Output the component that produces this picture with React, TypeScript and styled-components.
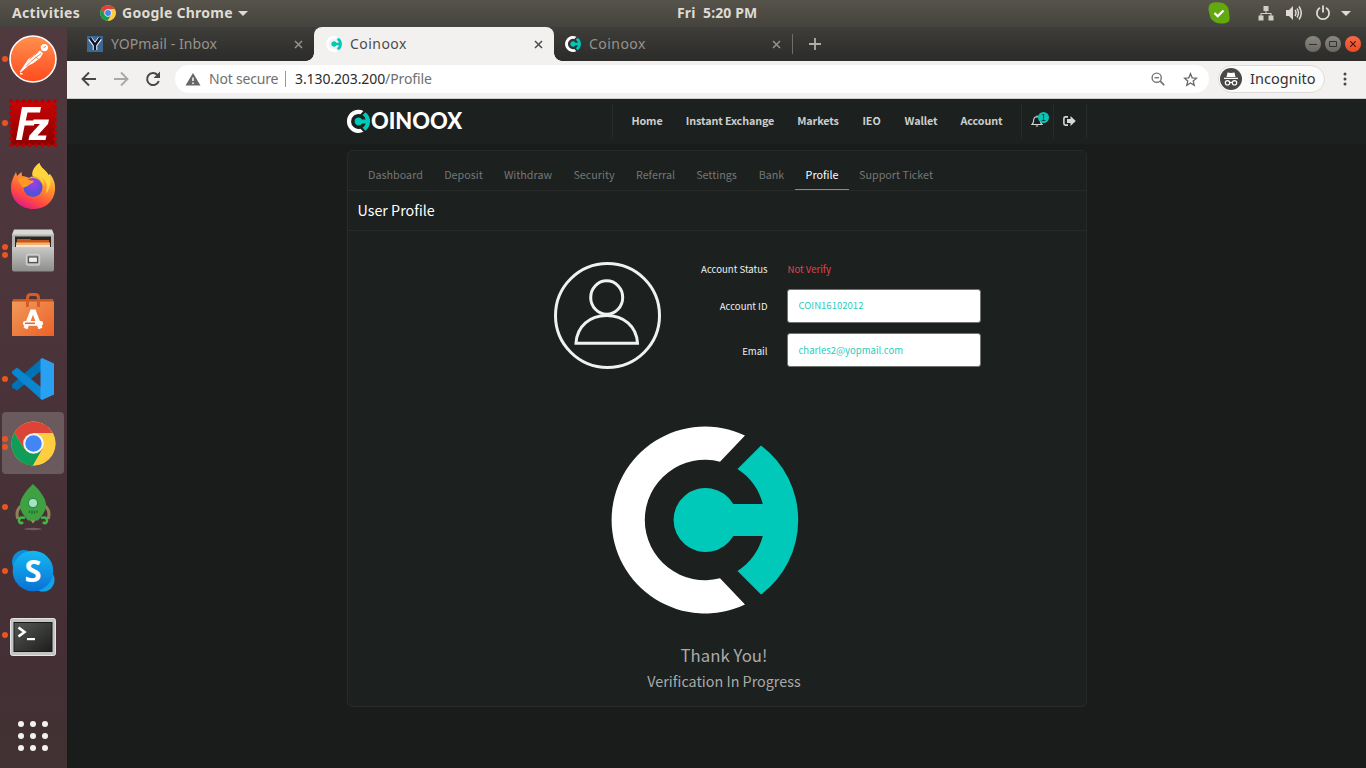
import React from "react";
import styled, { createGlobalStyle } from "styled-components";

const Global = createGlobalStyle`
  * { box-sizing: border-box; }
  html, body { margin: 0; padding: 0; background: #1a1b1b; overflow: hidden; }
  svg { display: block; flex: none; }
`;

const uiFont = `"Noto Sans", "Open Sans", sans-serif`;
const siteFont = `"Noto Sans CJK SC", "Noto Sans", sans-serif`;

const Desktop = styled.div`
  display: flex;
  flex-direction: column;
  width: 1366px;
  height: 768px;
  overflow: hidden;
  font-family: ${uiFont};
`;

/* ---------- top bar ---------- */
const TopBar = styled.header`
  display: grid;
  grid-template-columns: 665px 80px 1fr;
  align-items: center;
  height: 27px;
  flex: none;
  padding: 0 14px 1px 12px;
  background: linear-gradient(#56534b, #44433d);
  color: #dfdbd2;
  font-size: 14px;
  font-weight: 700;
  line-height: 26px;
  white-space: pre;
`;
const TopLeft = styled.div`
  display: flex;
  align-items: center;
`;
const TopLabel = styled.span<{ $spacing?: number }>`
  letter-spacing: ${(p) => p.$spacing ?? 0}px;
`;
const TopRight = styled.div`
  display: flex;
  align-items: center;
  justify-content: flex-end;
`;
const Gap = styled.span<{ $w: number }>`
  flex: none;
  width: ${(p) => p.$w}px;
`;
const Caret = styled.i`
  border: 5px solid transparent;
  border-top-color: #dfdbd2;
  border-bottom: 0;
`;

const Main = styled.div`
  display: flex;
  flex: 1;
  min-height: 0;
`;

/* ---------- dock ---------- */
const Dock = styled.nav`
  display: flex;
  flex-direction: column;
  width: 67px;
  flex: none;
  background: linear-gradient(#513a3f, #4a3439 45%, #432f35 85%, #413233);
`;
const DockItem = styled.div<{ $active?: boolean; $top?: number }>`
  position: relative;
  display: flex;
  align-items: center;
  justify-content: center;
  width: 62px;
  height: 62px;
  margin: 1px 0 1px 2px;
  padding-top: ${(p) => p.$top ?? 0}px;
  flex: none;
  border-radius: 4px;
  background: ${(p) => (p.$active ? "#6a595d" : "transparent")};
`;
const Dots = styled.div`
  position: absolute;
  left: 0;
  top: 0;
  height: 62px;
  display: flex;
  flex-direction: column;
  justify-content: center;
  gap: 2.5px;
`;
const Dot = styled.i`
  width: 6px;
  height: 6px;
  border-radius: 50%;
  background: #e95420;
`;
const AppGrid = styled.div`
  display: grid;
  grid-template-columns: repeat(3, 6px);
  gap: 6px;
  margin: auto 0 17px 18px;
`;
const GridDot = styled.i`
  height: 6px;
  border-radius: 50%;
  background: #f4f2f1;
`;

/* ---------- browser ---------- */
const Browser = styled.section`
  display: flex;
  flex-direction: column;
  flex: 1;
  min-width: 0;
`;
const TabStrip = styled.div`
  display: flex;
  align-items: center;
  height: 34px;
  flex: none;
  background: linear-gradient(#3e3d39, #2b2b29);
`;
const BrowserTab = styled.div<{ $active?: boolean; $w: number; $pl: number }>`
  position: relative;
  display: flex;
  align-items: center;
  width: ${(p) => p.$w}px;
  height: 34px;
  padding: 0 11px 0 ${(p) => p.$pl}px;
  border-radius: 8px 8px 0 0;
  background: ${(p) => (p.$active ? "#f2f1f0" : "transparent")};
  color: ${(p) => (p.$active ? "#4c4c4c" : "#95938e")};
  font-size: 14px;
  line-height: 34px;
  ${(p) =>
    p.$active &&
    `&::before, &::after {
      content: "";
      position: absolute;
      bottom: 0;
      left: -8px;
      width: 8px;
      height: 8px;
      background: radial-gradient(circle at 0 0, transparent 7.5px, #f2f1f0 8px);
    }
    &::after { left: auto; right: -8px; background: radial-gradient(circle at 100% 0, transparent 7.5px, #f2f1f0 8px); }`}
`;
const TabTitle = styled.span<{ $spacing: number }>`
  flex: 1;
  margin-left: 8px;
  letter-spacing: ${(p) => p.$spacing}px;
  white-space: nowrap;
`;
const TabDivider = styled.i`
  width: 1px;
  height: 20px;
  margin: 0 16px 0 0;
  background: #6e6d69;
`;
const WindowButtons = styled.div`
  display: flex;
  gap: 4px;
  margin: 0 5px 0 auto;
`;
const WindowButton = styled.div<{ $close?: boolean }>`
  display: grid;
  place-items: center;
  width: 16px;
  height: 16px;
  border-radius: 50%;
  background: ${(p) => (p.$close ? "linear-gradient(#f7694a, #ec4a22)" : "linear-gradient(#8a8880, #6a6861)")};
`;

const Toolbar = styled.div`
  display: flex;
  align-items: center;
  height: 38px;
  flex: none;
  padding: 0 15px 1px 14px;
  background: #f2f1f0;
  border-bottom: 1px solid #c9cdc9;
`;
const NavButtons = styled.div`
  display: flex;
  gap: 16px;
`;
const Omnibox = styled.div`
  display: flex;
  align-items: center;
  width: 1034px;
  height: 28px;
  margin-left: 14px;
  padding: 0 11px 0 10px;
  border-radius: 14px;
  background: #fff;
  color: #6f6f6f;
  font-size: 14px;
  line-height: 28px;
  white-space: nowrap;
`;
const Security = styled.span`
  width: 76px;
  margin-left: 8px;
  letter-spacing: -0.2px;
`;
const BarDivider = styled.i`
  width: 1px;
  height: 16px;
  margin-right: 9px;
  background: #9a9a9a;
`;
const Url = styled.span`
  flex: 1;
  letter-spacing: -0.1px;
`;
const Host = styled.span`
  color: #2c2c2c;
`;
const Incognito = styled.div`
  display: flex;
  align-items: center;
  gap: 8px;
  width: 107px;
  height: 28px;
  margin-left: 9px;
  padding-left: 1px;
  border: 1px solid #dddcda;
  border-radius: 14px;
  background: #fbfbfa;
  color: #333;
  font-size: 14.5px;
  line-height: 24px;
`;
const IncognitoLabel = styled.span`
  padding-bottom: 2px;
  letter-spacing: 0.05px;
`;

/* ---------- website ---------- */
const Site = styled.main`
  flex: 1;
  background: #1a1b1b;
  font-family: ${siteFont};
`;
const SiteHeader = styled.div`
  height: 45px;
  background: #1c201f;
`;
const HeaderInner = styled.div`
  display: flex;
  justify-content: space-between;
  width: 740px;
  height: 45px;
  margin: 0 auto 0 280px;
  padding-top: 5px;
`;
const Menu = styled.div`
  display: flex;
  height: 34px;
  padding-left: 6px;
  border-left: 1px solid #272b2a;
  border-right: 1px solid #272b2a;
`;
const MenuLink = styled.a<{ $w: number }>`
  width: ${(p) => p.$w}px;
  text-align: center;
  color: #cccecd;
  font-size: 10.75px;
  font-weight: 700;
  letter-spacing: -0.1px;
  line-height: 34px;
  white-space: nowrap;
`;
const IconCell = styled.div<{ $w: number }>`
  position: relative;
  display: grid;
  place-items: center;
  width: ${(p) => p.$w}px;
  padding-right: 1px;
  border-left: 1px solid #272b2a;
`;
const Badge = styled.span`
  position: absolute;
  left: 16px;
  top: 8px;
  width: 11px;
  height: 11px;
  border-radius: 50%;
  background: #00c9b9;
  color: #17302d;
  font-size: 9px;
  line-height: 11px;
  text-align: center;
`;

const Panel = styled.div`
  width: 740px;
  height: 557px;
  margin: 6px 0 0 280px;
  border: 1px solid #272a29;
  border-radius: 5px;
  background: #1c201f;
`;
const SubTabs = styled.div`
  display: flex;
  height: 40px;
  padding: 9px 0 0 10px;
  border-bottom: 1px solid #272a29;
`;
const SubTab = styled.a<{ $w: number; $active?: boolean }>`
  width: ${(p) => p.$w}px;
  height: 30px;
  border-bottom: 1px solid ${(p) => (p.$active ? "#00c9b9" : "transparent")};
  color: ${(p) => (p.$active ? "#fff" : "#747776")};
  text-align: center;
  font-size: 10.75px;
  line-height: 30px;
  white-space: nowrap;
`;
const Title = styled.h1`
  margin: 0;
  height: 40px;
  padding-left: 9.5px;
  border-bottom: 1px solid #272a29;
  color: #fff;
  font-size: 14.3px;
  font-weight: 400;
  line-height: 38px;
`;
const Profile = styled.div`
  display: flex;
  padding: 31px 0 0 206px;
`;
const Fields = styled.div`
  display: grid;
  grid-template-columns: 107px 194px;
  grid-template-rows: 16px 34px 34px;
  column-gap: 19px;
  row-gap: 10.5px;
`;
const Label = styled.label<{ $drop?: number }>`
  margin-top: ${(p) => p.$drop ?? 0}px;
  padding-right: 0.5px;
  color: #f0f1f1;
  font-size: 9.6px;
  text-align: right;
  line-height: 14px;
`;
const Status = styled.span`
  padding-left: 0.5px;
  color: #e0444b;
  font-size: 9.6px;
  line-height: 14px;
`;
const Field = styled.div<{ $line: number }>`
  border: 1px solid #6f7372;
  border-radius: 3px;
  background: #fff;
  padding-left: 10.5px;
  color: #1fcdc0;
  font-size: 9.55px;
  line-height: ${(p) => p.$line}px;
`;
const Notice = styled.div`
  display: flex;
  flex-direction: column;
  align-items: center;
  padding: 57px 0 0 14px;
  color: #a9abaa;
`;
const Thanks = styled.p`
  margin: 27px 0 0;
  font-size: 16.8px;
  line-height: 28px;
`;
const Progress = styled.p`
  margin: 0;
  font-size: 14.35px;
  line-height: 24px;
`;

/* ---------- drawings ---------- */
const CoinMark = ({ size, vb = "-94 -94 188 188", h }: { size: number; vb?: string; h?: number }) => (
  <svg width={size} height={h ?? size} viewBox={vb}>
    <path fill="#fff" d="M40-84.4A93.4 93.4 0 1 0 40 84.4L15 58.3A60.2 60.2 0 1 1 15-58.3Z" />
    <path
      fill="#00c9b9"
      d="M56-74.6A93.4 93.4 0 0 1 56 74.6L32.5 51A60.4 60.4 0 0 0 57.8 16H28.3A32 32 0 1 1 28.3-16H57.8A60.4 60.4 0 0 0 32.5-51Z"
    />
  </svg>
);

const Chrome = ({ size }: { size: number }) => (
  <svg width={size} height={size} viewBox="0 0 48 48">
    <circle cx="24" cy="24" r="23.5" fill="#ffcd40" />
    <path fill="#db4437" d="M3.7 12.2A23.5 23.5 0 0 1 44.4 12.8H24L14 29.6Z" />
    <path fill="#0f9d58" d="M3.7 12.2A23.5 23.5 0 0 0 23.5 47.5L33.8 29.5L14 29.6Z" />
    <path fill="#ffcd40" d="M44.4 12.8A23.5 23.5 0 0 1 23.5 47.5L34 29V12.8Z" />
    <circle cx="24" cy="24" r="11" fill="#f4f4f4" />
    <circle cx="24" cy="24" r="8.8" fill="#4285f4" />
  </svg>
);

const Close = () => (
  <svg width="9" height="9" viewBox="0 0 9 9" stroke="currentColor" strokeWidth="1.5">
    <path d="M1 1l7 7M8 1l-7 7" />
  </svg>
);

const Postman = () => (
  <svg width="48" height="48" viewBox="0 0 48 48">
    <defs>
      <linearGradient id="pm" x2="0" y2="1">
        <stop stopColor="#ff914d" />
        <stop offset="1" stopColor="#ff4b1f" />
      </linearGradient>
    </defs>
    <circle cx="24" cy="24" r="23" fill="url(#pm)" stroke="#fff" strokeWidth="1.6" />
    <circle cx="35.4" cy="12.6" r="3.6" fill="#fff" />
    <path d="M34.500 12.800l2.500-1.500" stroke="#ff7a3d" strokeWidth="1" />
    <path fill="#fff" d="M31 15.500l3 2.800-2.800 4.700-7 5.300-4.500 2.200-8 7-1-.8 5.200-7.700 3.500-5Z" />
    <path stroke="#ff7038" strokeWidth=".9" fill="none" d="M20.500 24l9-7M22 26.500l10-8M17 31.500l5-5M29.500 24l-3-2" />
    <path d="M11 38.500l2.500.5" stroke="#fff" strokeWidth="1.400" />
  </svg>
);

const FileZilla = () => (
  <svg width="48" height="48" viewBox="0 0 48 48">
    <defs>
      <linearGradient id="fz" x2="0" y2="1">
        <stop stopColor="#c80505" />
        <stop offset="1" stopColor="#8d0000" />
      </linearGradient>
    </defs>
    <rect x="2" y="2" width="44" height="44" fill="url(#fz)" />
    <rect x="2" y="2" width="44" height="44" fill="none" stroke="#b80000" strokeWidth="4" strokeLinecap="round" strokeDasharray="0.1 6.186" />
    <path fill="#fff" d="M13 8h19l-1 5.5H18.500l-1.700 8H26l-1 5H15.600L12.800 41H7Z" />
    <path fill="#fff" d="M24.500 20.500H40l-1 4.500L28.500 36.500H37.500L36.500 41H19.500l1-4.500L31 25H23.600Z" />
  </svg>
);

const Firefox = () => (
  <svg width="48" height="48" viewBox="0 0 48 48">
    <defs>
      <linearGradient id="ff" x1=".8" y1="0" x2=".3" y2="1">
        <stop stopColor="#fff44f" />
        <stop offset=".4" stopColor="#ff9a2e" />
        <stop offset=".75" stopColor="#ff4b3e" />
        <stop offset="1" stopColor="#e3178c" />
      </linearGradient>
      <radialGradient id="ffc" cx=".5" cy=".3">
        <stop stopColor="#a33cf0" />
        <stop offset="1" stopColor="#5451d6" />
      </radialGradient>
    </defs>
    <path fill="url(#ff)" d="M30.500 0c1 5 7 7 9 12l1.500-1c4 5 5.500 10 5 16C45 39 36 46 24 46S2 37 2 25c0-7 3-12 5-16l1 4 4.500-4 .500 4c3 0 5 1 7 2 2-2 3.500-1.500 4.500-1.800C23 8 27 2 30.500 0Z" />
    <circle cx="24" cy="24.500" r="9.500" fill="url(#ffc)" />
    <path fill="#ff9827" d="M9 16c5-2 8-1 11 1 2 1 4 0 5 1-1 2-3 2.500-4.500 3.500-1.500 1.500-4 3-6.500 3-2-3-4-5-5-8.500Z" />
    <path fill="#ffd53c" d="M30.500 0c-6 4-8 9-7 13 5 0 10 4 11 10 1-5-1-7-3-9 6 3 8 10 5 17 6-7 6-14 3-19S31 5 30.500 0Z" />
  </svg>
);

const Files = () => (
  <svg width="44" height="48" viewBox="0 0 44 48">
    <defs>
      <linearGradient id="fl" x2="0" y2="1">
        <stop stopColor="#c9c9c7" />
        <stop offset="1" stopColor="#8d8d8b" />
      </linearGradient>
    </defs>
    <path fill="#d8d8d6" d="M3 2.500h38l2 5V24H1V7.500Z" />
    <path fill="#b4b4b2" d="M1 7.500h42V24H1Z" />
    <rect x="4" y="9.500" width="36" height="11" fill="#2c2622" />
    <path fill="#c5561d" d="M6 12h13l1.500 1H38v9H6Z" />
    <rect x="5" y="15.500" width="34" height="2" fill="#ffb05c" />
    <rect x="5" y="17.500" width="34" height="2.500" fill="#fbe3c6" />
    <path fill="url(#fl)" d="M1 20h42v22.500a2 2 0 0 1-2 2H3a2 2 0 0 1-2-2Z" />
    <rect x="15.500" y="27.500" width="13" height="10.500" rx="2" fill="#aaa" stroke="#d0d0ce" strokeWidth="1.400" />
    <rect x="17.500" y="30" width="9" height="5.500" fill="#efefed" stroke="#555" strokeWidth="1.200" />
  </svg>
);

const Software = () => (
  <svg width="44" height="48" viewBox="0 0 44 48">
    <defs>
      <linearGradient id="sw" x2="1" y2="1">
        <stop stopColor="#f0995a" />
        <stop offset="1" stopColor="#ec6126" />
      </linearGradient>
    </defs>
    <path fill="#c4561f" d="M2 8h40l1 4H1Z" />
    <rect x="1" y="10.500" width="42" height="34.500" fill="url(#sw)" />
    <path d="M16.500 16V7q0-3.500 3.500-3.500h4q3.500 0 3.500 3.500v9" fill="none" stroke="#d65c25" strokeWidth="3" />
    <path d="M14.500 37.500l6.500-17h2l6.500 17" fill="none" stroke="#fff" strokeWidth="4.200" />
    <rect x="12" y="30" width="20" height="4.800" rx="2" fill="#fff" />
    <rect x="14" y="31.500" width="10" height="1.600" fill="#ed6a2e" />
  </svg>
);

const Code = () => (
  <svg width="44" height="48" viewBox="0 0 44 48">
    <path fill="#0072b8" d="M1 29.500L31 3v12L6 35.500 1 32.500Z" />
    <path fill="#0a86d1" d="M1 16.500L6 12.500 31 33v12L1 18.500Z" />
    <path fill="#29a0f2" d="M31 3l12 5.500v31L31 45 29.500 43.500V4.500Z" />
  </svg>
);

const Rocket = () => (
  <svg width="40" height="50" viewBox="0 0 40 50">
    <ellipse cx="20" cy="47" rx="9" ry="1.200" fill="#6d5f61" />
    <path d="M8 24Q2 29 5 37M32 24q6 5 3 13" stroke="#8d8359" strokeWidth="3" fill="none" />
    <path d="M20 41.500l-4-5h8Z" fill="#9a9468" />
    <path fill="#3fa142" d="M20 2C26 7.500 33 16 33 23c0 6.500-5 12-8 15.500h-10c-3-3.500-8-9-8-15.500C7 16 14 7.500 20 2Z" />
    <circle cx="20" cy="21" r="5.200" fill="#2f8a54" />
    <circle cx="20" cy="21" r="4" fill="#a6e3c0" />
    <path d="M16.500 28.500v2.500M19 28.500v3.500M21.500 28.500v3.500M24 28.500v2.500" stroke="#25762c" strokeWidth="1.400" />
    <path d="M12 36q-6-2-6 3 1 4 4 1M28 36q6-2 6 3-1 4-4 1" stroke="#45b648" strokeWidth="2.600" fill="none" />
  </svg>
);

const Skype = () => (
  <svg width="44" height="46" viewBox="0 0 44 46">
    <defs>
      <linearGradient id="sk" x2="0" y2="1">
        <stop stopColor="#14b8f4" />
        <stop offset="1" stopColor="#0a72d4" />
      </linearGradient>
    </defs>
    <circle cx="13" cy="14" r="12" fill="#0b8fd8" />
    <circle cx="32" cy="32" r="11.500" fill="#13a2e8" />
    <circle cx="22" cy="23" r="20.300" fill="url(#sk)" />
    <text x="22" y="34" textAnchor="middle" fontFamily="Open Sans" fontWeight="700" fontSize="31" fill="#fff">S</text>
  </svg>
);

const Terminal = () => (
  <svg width="46" height="38" viewBox="0 0 46 38">
    <defs>
      <linearGradient id="tm" x2="1" y2="1">
        <stop stopColor="#565855" />
        <stop offset="1" stopColor="#1c1d1c" />
      </linearGradient>
    </defs>
    <rect x=".500" y=".500" width="45" height="37" rx="2" fill="#c4c4c2" stroke="#e4e4e2" />
    <rect x="4" y="4.500" width="38" height="29" fill="url(#tm)" stroke="#191919" />
    <path d="M8.500 9.500l6 4.500-6 4.500" fill="none" stroke="#fff" strokeWidth="2.600" />
    <rect x="17" y="20" width="8" height="2.200" fill="#fff" />
  </svg>
);

const apps: { icon: React.ReactNode; dots: number; active?: boolean; top?: number }[] = [
  { icon: <Postman />, dots: 1 },
  { icon: <FileZilla />, dots: 1 },
  { icon: <Firefox />, dots: 0 },
  { icon: <Files />, dots: 2 },
  { icon: <Software />, dots: 0 },
  { icon: <Code />, dots: 1 },
  { icon: <Chrome size={45} />, dots: 2, active: true },
  { icon: <Rocket />, dots: 1 },
  { icon: <Skype />, dots: 1 },
  { icon: <Terminal />, dots: 1, top: 4 },
];

const menu: [string, number][] = [
  ["Home", 56],
  ["Instant Exchange", 110],
  ["Markets", 66],
  ["IEO", 41],
  ["Wallet", 58],
  ["Account", 63],
];

const subTabs: [string, number][] = [
  ["Dashboard", 75],
  ["Deposit", 61],
  ["Withdraw", 68],
  ["Security", 64],
  ["Referral", 59],
  ["Settings", 63],
  ["Bank", 47],
  ["Profile", 54],
  ["Support Ticket", 94],
];

export default function App() {
  return (
    <Desktop>
      <Global />
      <TopBar>
        <TopLeft>
          <TopLabel $spacing={0.3}>Activities</TopLabel>
          <Gap $w={20} />
          <Chrome size={16} />
          <Gap $w={6} />
          <TopLabel $spacing={0.25}>Google Chrome</TopLabel>
          <Gap $w={5} />
          <Caret />
        </TopLeft>
        <TopLabel $spacing={0.12}>Fri  5:20 PM</TopLabel>
        <TopRight>
          <svg width="22" height="22" viewBox="0 0 22 22">
            <path fill="#62a90f" d="M5 .5Q11 0 15 1q6 3 6 9l.5 5q1 6-6 6.500Q6 22 2.500 16L.5 8Q0 2 5 .5Z" />
            <path d="M6.500 11l3.200 3.200L15.500 8.500" stroke="#fff" strokeWidth="2.200" fill="none" />
          </svg>
          <Gap $w={28} />
          <svg width="16" height="16" viewBox="0 0 16 16" fill="#d2cfc7">
            <path d="M5.500 1h5v5h-5zM.5 10.500h5v5h-5zM10.500 10.500h5v5h-5zM7.500 6h1v2h-1zM2.500 8h11v1h-11zM2.500 8h1v3h-1zM12.500 8h1v3h-1z" />
          </svg>
          <Gap $w={12} />
          <svg width="16" height="16" viewBox="0 0 16 16" fill="none" stroke="#dfdbd2" strokeWidth="1.500">
            <path fill="#dfdbd2" stroke="none" d="M0 5h3l4-4v14L3 11H0z" />
            <path d="M9 5q2 3 0 6M11 3.500q3 4.500 0 9M13 1.500q4.500 6.500 0 13" />
          </svg>
          <Gap $w={13} />
          <svg width="16" height="16" viewBox="0 0 16 16" fill="none" stroke="#dfdbd2" strokeWidth="1.800">
            <path d="M5 2.800A6.100 6.100 0 1 0 11 2.800M8 .5v7" />
          </svg>
          <Gap $w={10} />
          <Caret />
          <Gap $w={1} />
        </TopRight>
      </TopBar>
      <Main>
        <Dock>
          {apps.map((a, i) => (
            <DockItem key={i} $active={a.active} $top={a.top}>
              <Dots>{Array.from({ length: a.dots }, (_, d) => <Dot key={d} />)}</Dots>
              {a.icon}
            </DockItem>
          ))}
          <AppGrid>{Array.from({ length: 9 }, (_, i) => <GridDot key={i} />)}</AppGrid>
        </Dock>
        <Browser>
          <TabStrip>
            <BrowserTab $w={247} $pl={20}>
              <svg width="16" height="16" viewBox="0 0 16 16">
                <rect width="16" height="16" fill="#3d6894" />
                <path d="M3 2.500l5 6.500v5M13 2.500L8 9" stroke="#fff" strokeWidth="4.500" fill="none" />
                <path d="M3 2l5 7v5M13 2L8 9" stroke="#0c1430" strokeWidth="2.500" fill="none" />
              </svg>
              <TabTitle $spacing={0.1}>YOPmail - Inbox</TabTitle>
              <Close />
            </BrowserTab>
            <BrowserTab $w={240} $pl={12} $active>
              <CoinMark size={16} />
              <TabTitle $spacing={0.45}>Coinoox</TabTitle>
              <Close />
            </BrowserTab>
            <BrowserTab $w={238} $pl={11}>
              <CoinMark size={16} />
              <TabTitle $spacing={0.45}>Coinoox</TabTitle>
              <Close />
            </BrowserTab>
            <TabDivider />
            <svg width="12" height="12" viewBox="0 0 12 12" stroke="#b0aea9" strokeWidth="1.800">
              <path d="M6 0v12M0 6h12" />
            </svg>
            <WindowButtons>
              <WindowButton>
                <svg width="8" height="8" stroke="#32312d"><path d="M0 4.500h8" /></svg>
              </WindowButton>
              <WindowButton>
                <svg width="8" height="8" fill="none" stroke="#32312d"><path d="M.5 1.500h7v5h-7z" /></svg>
              </WindowButton>
              <WindowButton $close>
                <svg width="6" height="6" stroke="#4a1c10" strokeWidth="1.200"><path d="M0 0l6 6M6 0L0 6" /></svg>
              </WindowButton>
            </WindowButtons>
          </TabStrip>
          <Toolbar>
            <NavButtons>
              <svg width="16" height="16" viewBox="0 0 16 16" fill="none" stroke="#484848" strokeWidth="1.900">
                <path d="M15 8H2M8 1.500L1.500 8 8 14.500" />
              </svg>
              <svg width="16" height="16" viewBox="0 0 16 16" fill="none" stroke="#a9a8a7" strokeWidth="1.900">
                <path d="M1 8h13M8 1.500L14.500 8 8 14.500" />
              </svg>
              <svg width="16" height="16" viewBox="0 0 16 16" fill="none" stroke="#484848" strokeWidth="2">
                <path d="M13.800 10A6 6 0 1 1 12.500 4" />
                <path fill="#484848" stroke="none" d="M15 .5V7H8.500z" />
              </svg>
            </NavButtons>
            <Omnibox>
              <svg width="16" height="16" viewBox="0 0 16 16">
                <path fill="#666" d="M8 2l7.500 12.500H.5z" />
                <path d="M8 6.500v3.500M8 11.500v1.500" stroke="#fff" strokeWidth="1.500" />
              </svg>
              <Security>Not secure</Security>
              <BarDivider />
              <Url><Host>3.130.203.200</Host>/Profile</Url>
              <svg width="14" height="14" viewBox="0 0 14 14" fill="none" stroke="#757575" strokeWidth="1.400">
                <circle cx="5.700" cy="5.700" r="4.600" />
                <path d="M9.200 9.200l4 4" strokeWidth="1.800" />
                <path d="M3.500 5.700h4.400" />
              </svg>
              <Gap $w={18} />
              <svg width="15" height="15" viewBox="0 0 16 16" fill="none" stroke="#686868" strokeWidth="1.400">
                <path d="M8 1.800l1.800 4.400 4.700.4-3.600 3.100 1.100 4.600L8 11.800l-4 2.500 1.100-4.600L1.500 6.600l4.700-.4z" />
              </svg>
            </Omnibox>
            <Incognito>
              <svg width="22" height="22" viewBox="0 0 22 22">
                <circle cx="11" cy="11" r="11" fill="#484848" />
                <path fill="#fff" d="M7.500 4.500l3.500.5 3.500-.5L15.500 9h-9zM4 9.800h14v1.200H4z" />
                <g fill="none" stroke="#fff" strokeWidth="1.200">
                  <circle cx="7.500" cy="14.800" r="2.200" />
                  <circle cx="14.500" cy="14.800" r="2.200" />
                  <path d="M9.700 14.500h2.600" />
                </g>
              </svg>
              <IncognitoLabel>Incognito</IncognitoLabel>
            </Incognito>
            <Gap $w={18} />
            <svg width="4" height="14" viewBox="0 0 4 14" fill="#484848">
              <circle cx="2" cy="2" r="1.500" /><circle cx="2" cy="7" r="1.500" /><circle cx="2" cy="12" r="1.500" />
            </svg>
          </Toolbar>
          <Site>
            <SiteHeader>
              <HeaderInner>
                <svg width="118" height="34" viewBox="0 0 118 34">
                  <g transform="translate(11.500 17.400) scale(.124)">
                    <path fill="#fff" d="M40-84.400A93.400 93.400 0 1 0 40 84.400L15 58.300A60.200 60.200 0 1 1 15-58.300Z" />
                    <path fill="#00c9b9" d="M56-74.600A93.400 93.400 0 0 1 56 74.600L32.500 51A60.400 60.400 0 0 0 57.800 16H28.300A32 32 0 1 1 28.300-16H57.800A60.400 60.400 0 0 0 32.500-51Z" />
                  </g>
                  <text x="24" y="25" textLength="91" lengthAdjust="spacingAndGlyphs" fontFamily="Lato" fontWeight="900" fontSize="21.800" fill="#fff">OINOOX</text>
                </svg>
                <Menu>
                  {menu.map(([t, w]) => <MenuLink key={t} $w={w}>{t}</MenuLink>)}
                  <Gap $w={8} />
                  <IconCell $w={32}>
                    <svg width="12" height="12" viewBox="0 0 12 12" fill="none" stroke="#d5d8d7" strokeWidth="1.100">
                      <path d="M1 9.500Q2.700 8 2.700 5Q2.700 2 6 1.800Q9.300 2 9.300 5q0 3 1.700 4.500zM4.800 11h2.400M6 .5v1.200" />
                    </svg>
                    <Badge>1</Badge>
                  </IconCell>
                  <IconCell $w={33}>
                    <svg width="13" height="10" viewBox="0 0 13 10" fill="#d5d8d7">
                      <path d="M7.500 0l5.300 5-5.300 5V7H4V3h3.500z" />
                      <path d="M5 .900H2.500Q.9.900.9 2.500v5Q.9 9.100 2.500 9.100H5" fill="none" stroke="#d5d8d7" strokeWidth="1.600" />
                    </svg>
                  </IconCell>
                </Menu>
              </HeaderInner>
            </SiteHeader>
            <Panel>
              <SubTabs>
                {subTabs.map(([t, w]) => <SubTab key={t} $w={w} $active={t === "Profile"}>{t}</SubTab>)}
              </SubTabs>
              <Title>User Profile</Title>
              <Profile>
                <svg width="107" height="107" viewBox="0 0 107 107" fill="none" stroke="#f0f2f1" strokeWidth="3">
                  <circle cx="53.500" cy="53.500" r="52" />
                  <ellipse cx="52.700" cy="35.500" rx="16" ry="16.700" />
                  <path d="M22 81.200C23 64 36 53.500 52.700 53.500S82.500 64 83.500 81.200Z" />
                </svg>
                <Fields>
                  <Label>Account Status</Label>
                  <Status>Not Verify</Status>
                  <Label $drop={10}>Account ID</Label>
                  <Field $line={31}>COIN16102012</Field>
                  <Label $drop={10.5}>Email</Label>
                  <Field $line={33}>charles2@yopmail.com</Field>
                </Fields>
              </Profile>
              <Notice>
                <CoinMark size={226} h={188} vb="-94 -94 226 188" />
                <Thanks>Thank You!</Thanks>
                <Progress>Verification In Progress</Progress>
              </Notice>
            </Panel>
          </Site>
        </Browser>
      </Main>
    </Desktop>
  );
}
